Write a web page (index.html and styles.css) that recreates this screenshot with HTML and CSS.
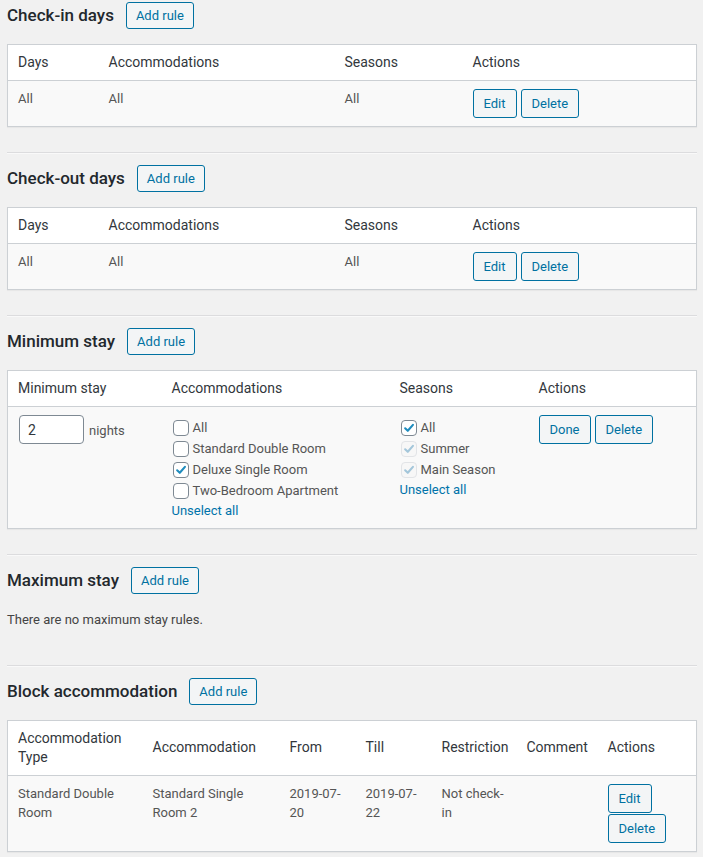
FILE: index.html
```html
<!DOCTYPE html>
<html lang="en">
<head>
<meta charset="utf-8">
<title>Booking rules</title>
<link rel="stylesheet" href="styles.css">
</head>
<body>
<div class="page">

  <section class="rule-section first">
    <div class="section-head">
      <h2 class="section-title">Check-in days</h2>
      <button class="btn btn-add" type="button">Add rule</button>
    </div>
    <table class="widefat t-days">
      <colgroup><col class="c1"><col class="c2"><col class="c3"><col></colgroup>
      <thead><tr><th>Days</th><th>Accommodations</th><th>Seasons</th><th>Actions</th></tr></thead>
      <tbody><tr>
        <td>All</td><td>All</td><td>All</td>
        <td><div class="actions"><button class="btn" type="button">Edit</button><button class="btn" type="button">Delete</button></div></td>
      </tr></tbody>
    </table>
  </section>
  <hr class="sep">

  <section class="rule-section">
    <div class="section-head">
      <h2 class="section-title">Check-out days</h2>
      <button class="btn btn-add" type="button">Add rule</button>
    </div>
    <table class="widefat t-days">
      <colgroup><col class="c1"><col class="c2"><col class="c3"><col></colgroup>
      <thead><tr><th>Days</th><th>Accommodations</th><th>Seasons</th><th>Actions</th></tr></thead>
      <tbody><tr>
        <td>All</td><td>All</td><td>All</td>
        <td><div class="actions"><button class="btn" type="button">Edit</button><button class="btn" type="button">Delete</button></div></td>
      </tr></tbody>
    </table>
  </section>
  <hr class="sep">

  <section class="rule-section">
    <div class="section-head">
      <h2 class="section-title">Minimum stay</h2>
      <button class="btn btn-add" type="button">Add rule</button>
    </div>
    <table class="widefat t-stay">
      <colgroup><col class="c1"><col class="c2"><col class="c3"><col></colgroup>
      <thead><tr><th>Minimum stay</th><th>Accommodations</th><th>Seasons</th><th>Actions</th></tr></thead>
      <tbody><tr>
        <td><input class="num" type="text" value="2"><span class="unit">nights</span></td>
        <td>
          <ul class="checklist">
            <li><span class="cb"></span>All</li>
            <li><span class="cb"></span>Standard Double Room</li>
            <li><span class="cb"><svg viewBox="0 0 16 16"><path d="M3.6 8.3 6.6 11.2 12.5 4.4"/></svg></span>Deluxe Single Room</li>
            <li><span class="cb"></span>Two-Bedroom Apartment</li>
          </ul>
          <a class="link" href="#">Unselect all</a>
        </td>
        <td>
          <ul class="checklist">
            <li><span class="cb"><svg viewBox="0 0 16 16"><path d="M3.6 8.3 6.6 11.2 12.5 4.4"/></svg></span>All</li>
            <li><span class="cb cb-disabled"><svg viewBox="0 0 16 16"><path d="M3.6 8.3 6.6 11.2 12.5 4.4"/></svg></span>Summer</li>
            <li><span class="cb cb-disabled"><svg viewBox="0 0 16 16"><path d="M3.6 8.3 6.6 11.2 12.5 4.4"/></svg></span>Main Season</li>
          </ul>
          <a class="link" href="#">Unselect all</a>
        </td>
        <td><div class="actions"><button class="btn" type="button">Done</button><button class="btn" type="button">Delete</button></div></td>
      </tr></tbody>
    </table>
  </section>
  <hr class="sep">

  <section class="rule-section">
    <div class="section-head">
      <h2 class="section-title">Maximum stay</h2>
      <button class="btn btn-add" type="button">Add rule</button>
    </div>
    <p class="empty">There are no maximum stay rules.</p>
  </section>
  <hr class="sep sep-after-empty">

  <section class="rule-section">
    <div class="section-head">
      <h2 class="section-title">Block accommodation</h2>
      <button class="btn btn-add" type="button">Add rule</button>
    </div>
    <table class="widefat t-block">
      <colgroup><col class="c1"><col class="c2"><col class="c3"><col class="c4"><col class="c5"><col class="c6"><col></colgroup>
      <thead><tr><th>Accommodation Type</th><th>Accommodation</th><th>From</th><th>Till</th><th>Restriction</th><th>Comment</th><th>Actions</th></tr></thead>
      <tbody><tr>
        <td>Standard Double Room</td>
        <td>Standard Single Room 2</td>
        <td>2019-07-20</td>
        <td>2019-07-22</td>
        <td>Not check-in</td>
        <td></td>
        <td><div class="actions stacked"><button class="btn" type="button">Edit</button><button class="btn" type="button">Delete</button></div></td>
      </tr></tbody>
    </table>
  </section>

</div>
</body>
</html>
```
FILE: styles.css
```css
html, body {
  margin: 0;
  background: #f1f1f1;
}

body {
  font-family: Roboto, "Liberation Sans", sans-serif;
  font-size: 13px;
  color: #444;
}

.page {
  padding: 0 6px 20px 7px;
}

.section-head {
  display: flex;
  align-items: center;
  gap: 12px;
}

.rule-section.first .section-head {
  margin-top: 2px;
}

.section-title {
  margin: 0;
  font-size: 17px;
  font-weight: 500;
  line-height: 1.3;
  color: #23282d;
}

.btn {
  box-sizing: border-box;
  font-family: inherit;
  font-size: 13px;
  color: #0071a1;
  background: #f3f5f6;
  border: 1px solid #0071a1;
  border-radius: 3px;
  height: 29px;
  line-height: 27px;
  padding: 0 10px;
  margin: 0;
  cursor: pointer;
  white-space: nowrap;
}

.btn-add {
  height: 27px;
  line-height: 25px;
  padding: 0 9px;
}

.sep {
  margin: 25px 0 11px;
  border: 0;
  border-top: 1px solid #dcdcde;
  border-bottom: 1px solid #f9f9f9;
  height: 0;
}

.sep-after-empty {
  margin-top: 35px;
}

.widefat {
  width: 100%;
  margin-top: 15px;
  table-layout: fixed;
  border-collapse: collapse;
  border: 1px solid #ccd0d4;
  box-shadow: 0 1px 1px rgba(0, 0, 0, 0.04);
}

.widefat th {
  font-size: 14px;
  font-weight: 400;
  line-height: 19px;
  color: #32373c;
  text-align: left;
  vertical-align: middle;
  padding: 8px 10px;
  background: #fff;
  border-bottom: 1px solid #ccd0d4;
}

.widefat td {
  font-size: 13px;
  line-height: 19.5px;
  color: #555;
  vertical-align: top;
  padding: 8px 10px;
  background: #f9f9f9;
}

.t-days .c1 { width: 91px; }
.t-days .c2 { width: 236px; }
.t-days .c3 { width: 128px; }

.t-stay .c1 { width: 154px; }
.t-stay .c2 { width: 228px; }
.t-stay .c3 { width: 139px; }

.t-block .c1 { width: 135px; }
.t-block .c2 { width: 137px; }
.t-block .c3 { width: 76px; }
.t-block .c4 { width: 76px; }
.t-block .c5 { width: 85px; }
.t-block .c6 { width: 81px; }

.actions {
  display: flex;
  flex-wrap: wrap;
  column-gap: 4px;
  row-gap: 1px;
}

.actions.stacked {
  flex-direction: column;
  align-items: flex-start;
}

.num {
  box-sizing: border-box;
  width: 65px;
  height: 29px;
  padding: 0 8px;
  margin: 0 0 0 1px;
  font-family: inherit;
  font-size: 14px;
  color: #32373c;
  background: #fff;
  border: 1px solid #7e8993;
  border-radius: 4px;
  vertical-align: baseline;
}

.unit {
  margin-left: 5px;
}

.checklist {
  list-style: none;
  margin: 0;
  padding: 2px 0 0;
}

.checklist li {
  display: flex;
  align-items: center;
  gap: 4px;
  height: 21px;
  margin-left: 1px;
}

.cb {
  box-sizing: border-box;
  flex: none;
  width: 16px;
  height: 16px;
  border: 1px solid #7e8993;
  border-radius: 4px;
  background: #fff;
  display: flex;
  align-items: center;
  justify-content: center;
}

.cb svg {
  width: 14px;
  height: 14px;
  fill: none;
  stroke: #1e8cbe;
  stroke-width: 2.4;
  stroke-linecap: round;
  stroke-linejoin: round;
}

.cb-disabled {
  border-color: #e2e4e7;
  background: #f7f7f7;
}

.cb-disabled svg {
  stroke: #a3c6da;
}

.link {
  color: #0073aa;
  text-decoration: none;
  line-height: 19px;
  display: block;
  width: max-content;
}

.empty {
  margin: 16px 0 0;
  line-height: 19.5px;
  color: #444;
}
```
